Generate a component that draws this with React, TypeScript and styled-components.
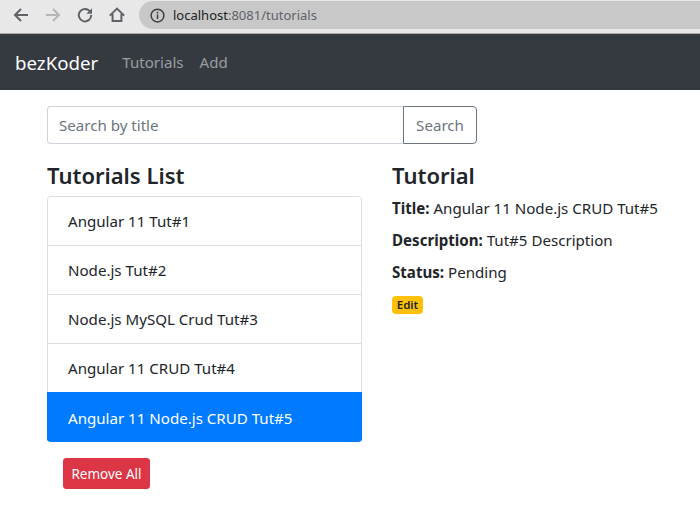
import React from "react";
import styled, { createGlobalStyle } from "styled-components";

const tutorials = [
  "Angular 11 Tut#1",
  "Node.js Tut#2",
  "Node.js MySQL Crud Tut#3",
  "Angular 11 CRUD Tut#4",
  "Angular 11 Node.js CRUD Tut#5",
];

const GlobalStyle = createGlobalStyle`
  * {
    box-sizing: border-box;
  }
  html, body {
    margin: 0;
    background: #fff;
  }
  body {
    width: 700px;
    height: 510px;
    overflow: hidden;
    font-family: "Noto Sans", "Open Sans", sans-serif;
    font-size: 15.1px;
    color: #212529;
  }
`;

export default function App() {
  return (
    <>
      <GlobalStyle />
      <Toolbar>
        <ToolIcon viewBox="0 0 16 16" stroke="#5f6368">
          <path d="M15 8H2M8 2 2 8l6 6" />
        </ToolIcon>
        <ToolIcon viewBox="0 0 16 16" stroke="#b4b6b9">
          <path d="M1 8h13M8 2l6 6-6 6" />
        </ToolIcon>
        <ToolIcon viewBox="0 0 16 16" stroke="#5f6368">
          <path d="M13.2 4.8A6.2 6.2 0 1 0 14.2 8" />
          <path d="M15 1.2v5.6H9.4z" fill="#5f6368" stroke="none" />
        </ToolIcon>
        <ToolIcon viewBox="0 0 16 16" stroke="#5f6368">
          <path d="M.8 8.6 8 1.6l7.2 7M3.6 7v7h8.8V7" />
        </ToolIcon>
        <AddressBar>
          <InfoIcon viewBox="0 0 16 16">
            <circle cx="8" cy="8" r="6.8" />
            <path d="M8 7v4.6M8 4v1.8" />
          </InfoIcon>
          <Host>localhost</Host>
          <UrlPath>:8081/tutorials</UrlPath>
        </AddressBar>
      </Toolbar>
      <Navbar>
        <Brand>bezKoder</Brand>
        <NavLink>Tutorials</NavLink>
        <NavLink>Add</NavLink>
      </Navbar>
      <Page>
        <SearchRow>
          <SearchInput placeholder="Search by title" readOnly />
          <SearchButton>Search</SearchButton>
        </SearchRow>
        <Columns>
          <ListColumn>
            <Heading>Tutorials List</Heading>
            <List>
              {tutorials.map((name, i) => (
                <ListItem key={name} $active={i === tutorials.length - 1}>
                  {name}
                </ListItem>
              ))}
            </List>
            <RemoveButton>Remove All</RemoveButton>
          </ListColumn>
          <DetailColumn>
            <Heading>Tutorial</Heading>
            <Fields>
              <Field>
                <strong>Title:</strong> Angular 11 Node.js CRUD Tut#5
              </Field>
              <Field>
                <strong>Description:</strong> Tut#5 Description
              </Field>
              <Field>
                <strong>Status:</strong> Pending
              </Field>
            </Fields>
            <EditBadge>Edit</EditBadge>
          </DetailColumn>
        </Columns>
      </Page>
    </>
  );
}

const Toolbar = styled.div`
  height: 34px;
  background: #e8e8e8;
  border-bottom: 1px solid #a9abad;
  display: flex;
  align-items: center;
  padding: 1px 0 4px 13px;
`;

const ToolIcon = styled.svg`
  width: 16px;
  height: 16px;
  margin-right: 16px;
  fill: none;
  stroke-width: 2;
  &:last-of-type {
    margin-right: 14px;
  }
`;

const AddressBar = styled.div`
  flex: 1;
  height: 28px;
  background: #c8c8c8;
  border-radius: 14px 0 0 14px;
  display: flex;
  align-items: center;
  padding-left: 11px;
  font-size: 13px;
`;

const InfoIcon = styled.svg`
  width: 15px;
  height: 15px;
  margin-right: 8px;
  fill: none;
  stroke: #3c4043;
  stroke-width: 1.6;
`;

const Host = styled.span`
  color: #202124;
`;

const UrlPath = styled.span`
  color: #5f6368;
`;

const Navbar = styled.nav`
  height: 56px;
  background: #343a40;
  display: flex;
  align-items: center;
  padding: 0 15px;
`;

const Brand = styled.span`
  color: #fff;
  font-size: 18.7px;
  margin-right: 24px;
`;

const NavLink = styled.span`
  color: rgba(255, 255, 255, 0.5);
  font-size: 15.1px;
  margin-right: 16px;
`;

const Page = styled.main`
  padding: 16px 0 0 47px;
`;

const SearchRow = styled.div`
  display: flex;
  width: 430px;
  height: 38px;
`;

const SearchInput = styled.input`
  flex: 1;
  min-width: 0;
  height: 100%;
  padding: 0 11px;
  border: 1px solid #ced4da;
  border-right: 0;
  border-radius: 4px 0 0 4px;
  font: inherit;
  outline: none;
  &::placeholder {
    color: #6c757d;
    opacity: 1;
  }
`;

const SearchButton = styled.button`
  width: 74px;
  height: 100%;
  padding: 0;
  background: #fff;
  border: 1px solid #6c757d;
  border-radius: 0 4px 4px 0;
  color: #6c757d;
  font: inherit;
`;

const Columns = styled.div`
  display: flex;
  margin-top: 17px;
`;

const ListColumn = styled.section`
  width: 315px;
  margin-right: 30px;
`;

const DetailColumn = styled.section`
  flex: 1;
`;

const Heading = styled.h4`
  margin: 0 0 7px;
  font-size: 22px;
  font-weight: 600;
  line-height: 28px;
`;

const List = styled.ul`
  list-style: none;
  margin: 0;
  padding: 0;
  border-radius: 4px;
  overflow: hidden;
`;

const ListItem = styled.li<{ $active: boolean }>`
  height: ${(p) => (p.$active ? "50px" : "49px")};
  display: flex;
  align-items: center;
  padding: 0 20px;
  color: ${(p) => (p.$active ? "#fff" : "#212529")};
  background: ${(p) => (p.$active ? "#007bff" : "#fff")};
  border: 1px solid ${(p) => (p.$active ? "#007bff" : "rgba(0, 0, 0, 0.125)")};
  border-bottom-width: 0;
  &:first-child {
    border-radius: 4px 4px 0 0;
  }
`;

const RemoveButton = styled.button`
  display: block;
  width: 87px;
  height: 31px;
  margin: 16px 0 0 16px;
  padding: 0;
  background: #dc3545;
  border: 1px solid #dc3545;
  border-radius: 3px;
  color: #fff;
  font: inherit;
  font-size: 13.5px;
`;

const Fields = styled.div`
  display: flex;
  flex-direction: column;
  gap: 16px;
  padding-top: 4px;
  margin-bottom: 16px;
`;

const Field = styled.div`
  line-height: 16px;
`;

const EditBadge = styled.span`
  display: block;
  width: 31px;
  height: 18px;
  background: #ffc107;
  border-radius: 4px;
  text-align: center;
  font-size: 11.5px;
  font-weight: 600;
  line-height: 18px;
`;
